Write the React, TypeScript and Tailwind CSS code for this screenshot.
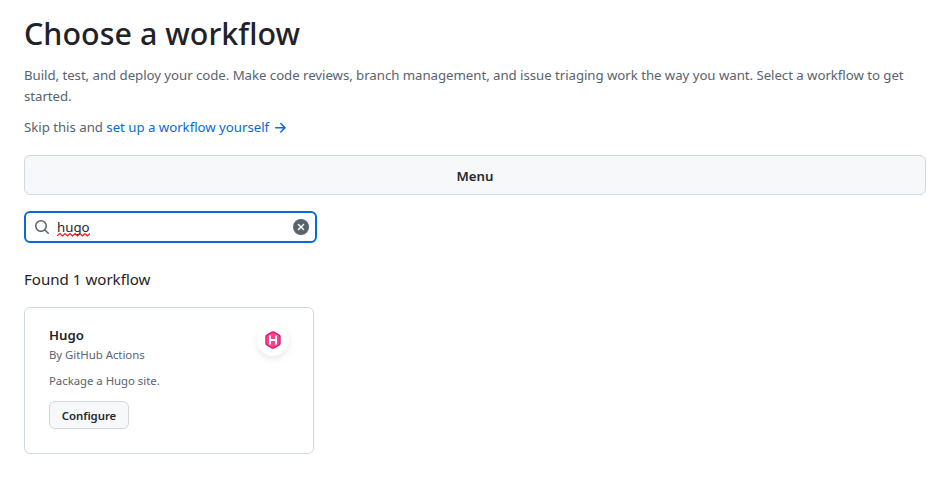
import React from 'react';

function ArrowRight() {
  return (
    <svg width="16" height="16" viewBox="0 0 16 16" fill="currentColor" className="shrink-0">
      <path d="M8.22 2.97a.75.75 0 0 1 1.06 0l4.25 4.25a.75.75 0 0 1 0 1.06l-4.25 4.25a.751.751 0 0 1-1.042-.018.751.751 0 0 1-.018-1.042l2.97-2.97H3.75a.75.75 0 0 1 0-1.5h7.44L8.22 4.03a.75.75 0 0 1 0-1.06Z" />
    </svg>
  );
}

function SearchIcon() {
  return (
    <svg width="16" height="16" viewBox="0 0 16 16" fill="currentColor" className="shrink-0 text-[#59636e]">
      <path d="M10.68 11.74a6 6 0 0 1-7.922-8.982 6 6 0 0 1 8.982 7.922l3.04 3.04a.749.749 0 0 1-.326 1.275.749.749 0 0 1-.734-.215ZM11.5 7a4.499 4.499 0 1 0-8.997 0A4.499 4.499 0 0 0 11.5 7Z" />
    </svg>
  );
}

function ClearIcon() {
  return (
    <svg width="16" height="16" viewBox="0 0 16 16" fill="currentColor" className="shrink-0 text-[#59636e]">
      <path d="M2.343 13.657A8 8 0 1 1 13.658 2.343 8 8 0 0 1 2.343 13.657ZM6.03 4.97a.751.751 0 0 0-1.042.018.751.751 0 0 0-.018 1.042L6.94 8 4.97 9.97a.749.749 0 0 0 .326 1.275.749.749 0 0 0 .734-.215L8 9.06l1.97 1.97a.749.749 0 0 0 1.275-.326.749.749 0 0 0-.215-.734L9.06 8l1.97-1.97a.749.749 0 0 0-.326-1.275.749.749 0 0 0-.734.215L8 6.94Z" />
    </svg>
  );
}

function HugoLogo() {
  return (
    <svg width="18" height="18" viewBox="0 0 18 18">
      <path d="M8 1.1a2 2 0 0 1 2 0l5.2 2.9a1.8 1.8 0 0 1 .9 1.6v6.8a1.8 1.8 0 0 1-.9 1.6L10 16.9a2 2 0 0 1-2 0L2.8 14a1.8 1.8 0 0 1-.9-1.6V5.6a1.8 1.8 0 0 1 .9-1.6Z" fill="#ff4088" stroke="#c9177e" strokeWidth="1.1" />
      <path d="M6 4.5v9M12 4.5v9M6 9h6" stroke="#fff" strokeWidth="2" fill="none" />
    </svg>
  );
}

function Squiggle() {
  return (
    <svg width="33" height="5" viewBox="0 0 33 5" className="absolute left-0 top-[15px]">
      <path d="M0 3.5h.5L3 1.5l2.500 2.500L8 1.500l2.500 2.500L13 1.500l2.500 2.500L18 1.500l2.500 2.500L23 1.500l2.500 2.500L28 1.500l2.500 2.500L33 1.500" fill="none" stroke="#f01818" strokeWidth="1.2" />
    </svg>
  );
}

export default function App() {
  return (
    <main className="h-[502px] overflow-hidden bg-white px-6 pt-[10px] font-['Noto_Sans','Open_Sans',sans-serif] text-[13.25px] leading-[21px] text-[#59636e]">
      <h1 className="text-[30.4px] leading-[48px] font-medium tracking-[0.04px] text-[#1f2328]">
        <span>Choose a workflow</span>
      </h1>
      <p className="mt-[7px] tracking-[-0.05px]">
        <span className="block whitespace-nowrap"><span>Build, test, and deploy your code. Make code reviews, branch management, and issue triaging work the way you want. Select a workflow to get</span></span>
        <span>started.</span>
      </p>
      <p className="mt-[10px] flex items-center whitespace-pre tracking-[-0.03px]">
        <span>Skip this and </span>
        <a className="flex items-center gap-[3px] text-[#0969da]">
          <span>set up a workflow yourself</span>
          <ArrowRight />
        </a>
      </p>
      <button className="mt-[17px] flex h-10 w-full items-center justify-center rounded-md border border-[#d1d9e0] bg-[#f6f8fa] pt-0.5 font-semibold text-[#25292e]">
        <span>Menu</span>
      </button>
      <div className="mt-4 flex h-8 w-[293px] items-center rounded-md border-2 border-[#0969da] pr-1.5 pl-2">
        <SearchIcon />
        <div className="relative ml-[7px] flex-1 leading-[20px] text-[#1f2328]">
          <span>hugo</span>
          <Squiggle />
        </div>
        <ClearIcon />
      </div>
      <h2 className="mt-6 text-[15.1px] leading-6 text-[#1f2328]">
        <span>Found 1 workflow</span>
      </h2>
      <article className="mt-4 flex h-[147px] w-[290px] justify-between rounded-md border border-[#d1d9e0] pt-[17px] pr-6 pl-6">
        <div className="text-[11.4px] leading-[18px] tracking-[-0.03px]">
          <h3 className="text-[13.25px] leading-[21px] font-semibold text-[#1f2328]"><span>Hugo</span></h3>
          <p><span>By GitHub Actions</span></p>
          <p className="mt-2"><span>Package a Hugo site.</span></p>
          <button className="mt-[11px] flex h-7 w-20 items-center justify-center rounded-md border border-[#d1d9e0] bg-[#f6f8fa] pt-px font-semibold text-[#25292e]">
            <span>Configure</span>
          </button>
        </div>
        <div className="-mt-px flex size-8 items-center justify-center rounded-full bg-white shadow-[0_3px_6px_rgba(140,149,159,0.2)]">
          <HugoLogo />
        </div>
      </article>
    </main>
  );
}
